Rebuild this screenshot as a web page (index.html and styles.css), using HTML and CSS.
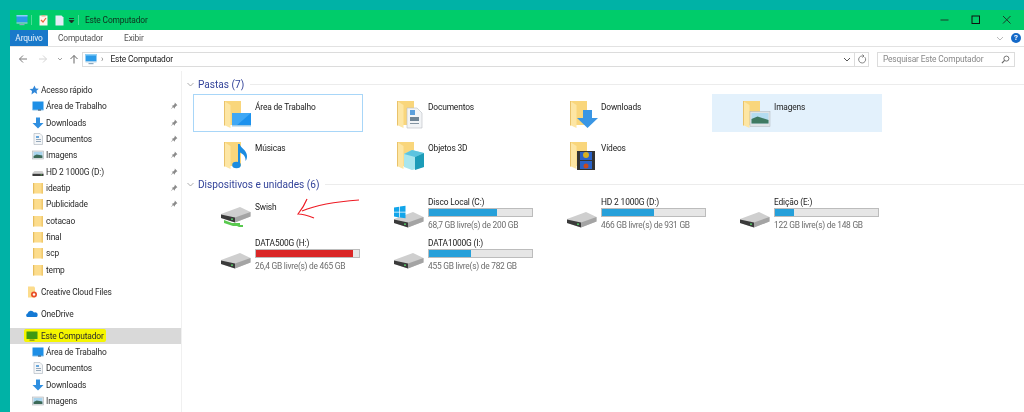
FILE: index.html
```html
<!DOCTYPE html>
<html lang="pt">
<head>
<meta charset="utf-8">
<title>Este Computador</title>
<link rel="stylesheet" href="styles.css">
</head>
<body>
<svg class="defs" width="0" height="0">
  <defs>
    <symbol id="monitor" viewBox="0 0 12 12"><rect x="0.5" y="1" width="11" height="7.5" fill="#2b9be8"/><rect x="0.5" y="1" width="11" height="1.5" fill="#8cd0f7"/><rect x="0.5" y="8.5" width="11" height="1" fill="#bcd6e8"/><rect x="3.5" y="10" width="5" height="1.2" fill="#8aa8c0"/></symbol>
    <symbol id="desk" viewBox="0 0 12 12"><rect x="0.5" y="1.5" width="11" height="8.5" fill="#1e8fe6"/><rect x="0.5" y="9.6" width="11" height="0.9" fill="#8cc4ec"/><rect x="6" y="9.6" width="3" height="0.9" fill="#345"/></symbol>
    <symbol id="down" viewBox="0 0 12 12"><path d="M4 0.5h4v5.5h3.5L6 11.5 0.5 6H4z" fill="#2f8fe0"/></symbol>
    <symbol id="doc" viewBox="0 0 12 12"><path d="M2 0.5h6l2.5 2.5v8.5H2z" fill="#f4f6f8" stroke="#b4bcc4" stroke-width="0.7"/><rect x="4" y="3" width="3" height="2" fill="#6aa8dc"/><rect x="4" y="6" width="5" height="0.8" fill="#7d95aa"/><rect x="4" y="8" width="5" height="0.8" fill="#7d95aa"/></symbol>
    <symbol id="pic" viewBox="0 0 12 12"><rect x="0.5" y="2" width="11" height="8" fill="#e3e6e9" stroke="#b0b4b8" stroke-width="0.6"/><rect x="1.6" y="3" width="8.8" height="6" fill="#a8d4ee"/><path d="M1.6 7l3-1.6 5.8 1.2V9H1.6z" fill="#3c6a58"/></symbol>
    <symbol id="hd" viewBox="0 0 12 12"><path d="M0.5 7l2-2h8l1 2v2.5H0.5z" fill="#d0d0d0"/><rect x="0.5" y="7.8" width="11" height="2.2" fill="#3c3c3c"/><rect x="8.6" y="8.4" width="1.2" height="0.9" fill="#5fd35f"/></symbol>
    <symbol id="fold" viewBox="0 0 12 12"><path d="M1 1h8.5l1.5 1v9.5H1z" fill="#fcdc8c"/><path d="M1 1h1.2v10.5H1z" fill="#e6bd5e"/><path d="M9.5 1h1.500v10.500H9.500z" fill="#f0c86c"/></symbol>
    <symbol id="pin" viewBox="0 0 8 8"><path d="M4.800 0.600l2.600 2.600-1 .5-1.400 1.600-.3 1.400-3-3 1.500-.3 1.500-1.400zM2.400 5l-1.600 2.200L3 5.600z" fill="#8a8a8a"/></symbol>
    <symbol id="bigfolder" viewBox="0 0 32 32"><path d="M3 2h17v24H3z" fill="#f9d67c"/><path d="M3 2l6.500 4v23L3 26z" fill="#fde6a4"/><path d="M3 2h1v24.500H3z" fill="#e9c26a"/></symbol>
    <symbol id="drive" viewBox="0 0 30 16"><path d="M0 7L19 0l10.500 5v4.500L14 15.500 0 11z" fill="#cfcfcf"/><path d="M0 7.500L14 10.500v5L0 11z" fill="#3a3a3a"/><path d="M14 10.500L29.500 5v4.500L14 15.500z" fill="#a4a4a4"/><rect x="10" y="11.500" width="2" height="1.300" fill="#59d66b"/></symbol>
  </defs>
</svg>
<div class="window">
  <header class="titlebar">
    <div class="qat">
      <svg class="ico12"><use href="#monitor"/></svg>
      <span class="qsep"></span>
      <svg class="qico" viewBox="0 0 9 11"><path d="M0.500 0.500h8v10h-8z" fill="#fdf6ee"/><path d="M2 5l2 2 3-4" stroke="#e8673a" stroke-width="1.200" fill="none"/><rect x="2.500" y="0" width="4" height="1.500" fill="#cdb38e"/></svg>
      <svg class="qico qdoc" viewBox="0 0 9 11"><path d="M0.500 0.500h6l2 2v8h-8z" fill="#e4ecf6"/></svg>
      <svg class="qmore" viewBox="0 0 7 7"><path d="M1 1.500h5M1.200 3.500h4.600L3.500 6z" stroke="#222" stroke-width="0.800" fill="#222"/></svg>
      <span class="qsep"></span>
      <span class="wintitle">Este Computador</span>
    </div>
    <div class="controls">
      <svg class="ctl" viewBox="0 0 10 10"><path d="M0.500 5h8" stroke="#1c3b2a" stroke-width="1"/></svg>
      <svg class="ctl" viewBox="0 0 10 10"><rect x="1" y="1" width="7.500" height="7.500" fill="none" stroke="#111" stroke-width="1"/></svg>
      <svg class="ctl" viewBox="0 0 10 10"><path d="M1 1l7.500 7.500M8.500 1L1 8.500" stroke="#1c3b2a" stroke-width="1"/></svg>
    </div>
  </header>
  <nav class="ribbon">
    <span class="tab tab-file">Arquivo</span>
    <span class="tab">Computador</span>
    <span class="tab tab-view">Exibir</span>
    <span class="ribbon-end">
      <svg class="rchev" viewBox="0 0 8 5"><path d="M1 1l3 3 3-3" fill="none" stroke="#a8a8a8" stroke-width="0.800"/></svg>
      <span class="help">?</span>
    </span>
  </nav>
  <div class="addr">
    <div class="navs">
      <svg class="nav" viewBox="0 0 10 10"><path d="M9 5H1.500M5 1.500L1.500 5 5 8.500" fill="none" stroke="#7a7a7a" stroke-width="1"/></svg>
      <svg class="nav" viewBox="0 0 10 10"><path d="M1 5h7.500M5 1.500L8.500 5 5 8.500" fill="none" stroke="#d4d4d4" stroke-width="1"/></svg>
      <svg class="nav nav-s" viewBox="0 0 6 6"><path d="M1 2l2 2 2-2" fill="none" stroke="#8a8a8a" stroke-width="0.800"/></svg>
      <svg class="nav" viewBox="0 0 10 10"><path d="M5 9.500V1.500M1.500 5L5 1.500 8.500 5" fill="none" stroke="#666" stroke-width="1"/></svg>
    </div>
    <div class="addrbox">
      <svg class="ico12"><use href="#monitor"/></svg>
      <span class="crumb-sep">›</span>
      <span class="crumb">Este Computador</span>
      <svg class="addr-dd" viewBox="0 0 8 5"><path d="M1 1l3 3 3-3" fill="none" stroke="#555" stroke-width="1"/></svg>
      <span class="addr-div"></span>
      <svg class="addr-ref" viewBox="0 0 10 10"><path d="M7.800 3.200A3.500 3.500 0 1 1 4.800 2H7M5.500 0.500L7 2 5.500 3.500" fill="none" stroke="#777" stroke-width="0.900"/></svg>
    </div>
    <div class="search">
      <span>Pesquisar Este Computador</span>
      <svg class="lens" viewBox="0 0 10 10"><circle cx="6" cy="4" r="2.800" fill="none" stroke="#666"/><path d="M4 6L1 9" stroke="#666" stroke-width="1.300"/></svg>
    </div>
  </div>
  <div class="main">
    <aside class="side">
      <div class="row row-top"><svg class="star" viewBox="0 0 10 10"><path d="M5.500 0.500l1.300 3 3 .3-2.300 2 .7 3.200-2.700-1.700L2.500 9.500 3 6 .5 4l3.300-.3z" fill="#2f86d8"/></svg>Acesso rápido</div>
      <div class="row"><svg class="ico12"><use href="#desk"/></svg><span class="lbl">Área de Trabalho</span><svg class="pin"><use href="#pin"/></svg></div>
      <div class="row"><svg class="ico12"><use href="#down"/></svg><span class="lbl">Downloads</span><svg class="pin"><use href="#pin"/></svg></div>
      <div class="row"><svg class="ico12"><use href="#doc"/></svg><span class="lbl">Documentos</span><svg class="pin"><use href="#pin"/></svg></div>
      <div class="row"><svg class="ico12"><use href="#pic"/></svg><span class="lbl">Imagens</span><svg class="pin"><use href="#pin"/></svg></div>
      <div class="row"><svg class="ico12"><use href="#hd"/></svg><span class="lbl">HD 2 1000G (D:)</span><svg class="pin"><use href="#pin"/></svg></div>
      <div class="row"><svg class="ico12"><use href="#fold"/></svg><span class="lbl">ideatip</span><svg class="pin"><use href="#pin"/></svg></div>
      <div class="row"><svg class="ico12"><use href="#fold"/></svg><span class="lbl">Publicidade</span><svg class="pin"><use href="#pin"/></svg></div>
      <div class="row"><svg class="ico12"><use href="#fold"/></svg><span class="lbl">cotacao</span></div>
      <div class="row"><svg class="ico12"><use href="#fold"/></svg><span class="lbl">final</span></div>
      <div class="row"><svg class="ico12"><use href="#fold"/></svg><span class="lbl">scp</span></div>
      <div class="row"><svg class="ico12"><use href="#fold"/></svg><span class="lbl">temp</span></div>
      <div class="row row-icon row-gap"><svg class="ico-top" viewBox="0 0 12 12"><path d="M2 0.500h6l1 1v10H2z" fill="#fcdc8c"/><circle cx="8" cy="8.500" r="3" fill="#e8502a"/><circle cx="8" cy="8.500" r="1.200" fill="#fff"/></svg>Creative Cloud Files</div>
      <div class="row row-icon row-gap"><svg class="ico-top" viewBox="0 0 12 12"><path d="M1 9a2 2 0 0 1 .5-3.500A3.500 3.500 0 0 1 8 4.500 2.500 2.500 0 0 1 11.500 7.500 1.500 1.500 0 0 1 10.500 9z" fill="#1479d4"/></svg>OneDrive</div>
      <div class="row row-gap row-sel"><span class="mark"><svg class="ico-top" viewBox="0 0 12 12"><rect x="0.500" y="1.500" width="11" height="7.500" fill="#3f9a12"/><rect x="3.500" y="9.500" width="5" height="1.200" fill="#7a8a10"/></svg>Este Computador</span></div>
      <div class="row"><svg class="ico12"><use href="#desk"/></svg><span class="lbl">Área de Trabalho</span></div>
      <div class="row"><svg class="ico12"><use href="#doc"/></svg><span class="lbl">Documentos</span></div>
      <div class="row"><svg class="ico12"><use href="#down"/></svg><span class="lbl">Downloads</span></div>
      <div class="row"><svg class="ico12"><use href="#pic"/></svg><span class="lbl">Imagens</span></div>
    </aside>
    <section class="content">
      <h2 class="group"><svg class="gchev" viewBox="0 0 7 5"><path d="M0.500 1l3 3 3-3" fill="none" stroke="#8a8a8a" stroke-width="0.700"/></svg><span>Pastas (7)</span><i></i></h2>
      <div class="tiles">
        <div class="tile tile-focus">
          <svg class="big" viewBox="0 0 32 32"><use href="#bigfolder" width="32" height="32"/><rect x="11" y="14" width="19" height="13" fill="#1c92ee"/><path d="M11 14h19L15 27h-4z" fill="#3fa8f5"/><rect x="11" y="26" width="19" height="1.500" fill="#9cc9e6"/></svg>
          <span class="name">Área de Trabalho</span>
        </div>
        <div class="tile">
          <svg class="big" viewBox="0 0 32 32"><use href="#bigfolder" width="32" height="32"/><path d="M13 9h10l5 5v15H13z" fill="#f2f4f6" stroke="#b8bec4" stroke-width="0.600"/><rect x="16" y="11" width="5" height="5" fill="#5a9fdc"/><rect x="16" y="18" width="9" height="4" fill="#6f8494"/><rect x="16" y="24" width="9" height="1" fill="#8495a2"/></svg>
          <span class="name">Documentos</span>
        </div>
        <div class="tile">
          <svg class="big" viewBox="0 0 32 32"><use href="#bigfolder" width="32" height="32"/><path d="M16 13h9v8h6L20.500 31 10 21h6z" transform="translate(0 -2)" fill="#3a96e4"/></svg>
          <span class="name">Downloads</span>
        </div>
        <div class="tile tile-sel">
          <svg class="big" viewBox="0 0 32 32"><use href="#bigfolder" width="32" height="32"/><rect x="10" y="12.500" width="20" height="15" fill="#dfe3e6" stroke="#b0b6bc" stroke-width="0.500"/><rect x="11.500" y="14" width="17" height="10.500" fill="#b4dcf0"/><path d="M11.500 20l6-2.500 11 3.500v3.500h-17z" fill="#3f7a62"/></svg>
          <span class="name">Imagens</span>
        </div>
        <div class="tile">
          <svg class="big" viewBox="0 0 32 32"><use href="#bigfolder" width="32" height="32"/><path d="M17 25V4h1.800c.4 4 7.200 6 7.200 12 0 2-.5 4-1.500 5 .5-4-2-7-5.500-8.500V25z" fill="#1b8ce0"/><ellipse cx="15.500" cy="25" rx="4.300" ry="3.300" fill="#1b8ce0"/></svg>
          <span class="name">Músicas</span>
        </div>
        <div class="tile">
          <svg class="big" viewBox="0 0 32 32"><use href="#bigfolder" width="32" height="32"/><path d="M18 10l12 3v14l-12 3-8-3V14z" fill="#a8e6ee"/><path d="M10 14l8-4 12 3-9 4z" fill="#5cc4e0"/><path d="M21 17l9-4v14l-9 3z" fill="#1c9cb8"/></svg>
          <span class="name">Objetos 3D</span>
        </div>
        <div class="tile">
          <svg class="big" viewBox="0 0 32 32"><use href="#bigfolder" width="32" height="32"/><rect x="10" y="11" width="18" height="19" fill="#333"/><rect x="13" y="12" width="12" height="8" fill="#2a62c8"/><rect x="13" y="21" width="12" height="8" fill="#2a62c8"/><circle cx="19" cy="15" r="3" fill="#d8b020"/><circle cx="19" cy="26" r="2.500" fill="#c84a20"/></svg>
          <span class="name">Vídeos</span>
        </div>
      </div>
      <h2 class="group group-2"><svg class="gchev" viewBox="0 0 7 5"><path d="M0.500 1l3 3 3-3" fill="none" stroke="#8a8a8a" stroke-width="0.700"/></svg><span>Dispositivos e unidades (6)</span><i></i></h2>
      <div class="tiles tiles-drives">
        <div class="tile">
          <svg class="big big-drive" viewBox="0 0 32 32"><use href="#drive" x="0" y="7" width="30" height="16"/><path d="M3 20l8 3h8v2h3v2h-4l-2-1h-4l-9-3z" fill="#59c94f"/></svg>
          <span class="name name-swish">Swish</span>
        </div>
        <div class="tile">
          <svg class="big big-drive" viewBox="0 0 32 32"><use href="#drive" x="0" y="12" width="30" height="16"/><path d="M0 7.500l5.300-.8v5H0zM6 6.600L11.500 5.800v5.900H6zM0 12.400h5.300v5L0 16.600zM6 12.400h5.500v5.900L6 17.500z" fill="#12a5ea"/></svg>
          <div class="meter"><span class="name">Disco Local (C:)</span><div class="bar"><b style="width:66%"></b></div><span class="free">68,7 GB livre(s) de 200 GB</span></div>
        </div>
        <div class="tile">
          <svg class="big big-drive" viewBox="0 0 32 32"><use href="#drive" x="0" y="12" width="30" height="16"/></svg>
          <div class="meter"><span class="name">HD 2 1000G (D:)</span><div class="bar"><b style="width:50%"></b></div><span class="free">466 GB livre(s) de 931 GB</span></div>
        </div>
        <div class="tile">
          <svg class="big big-drive" viewBox="0 0 32 32"><use href="#drive" x="0" y="12" width="30" height="16"/></svg>
          <div class="meter"><span class="name">Edição (E:)</span><div class="bar"><b style="width:18%"></b></div><span class="free">122 GB livre(s) de 148 GB</span></div>
        </div>
        <div class="tile">
          <svg class="big big-drive" viewBox="0 0 32 32"><use href="#drive" x="0" y="12" width="30" height="16"/></svg>
          <div class="meter"><span class="name">DATA500G (H:)</span><div class="bar"><b class="low" style="width:94%"></b></div><span class="free">26,4 GB livre(s) de 465 GB</span></div>
        </div>
        <div class="tile">
          <svg class="big big-drive" viewBox="0 0 32 32"><use href="#drive" x="0" y="12" width="30" height="16"/></svg>
          <div class="meter"><span class="name">DATA1000G (I:)</span><div class="bar"><b style="width:41%"></b></div><span class="free">455 GB livre(s) de 782 GB</span></div>
        </div>
      </div>
      <svg class="arrow" viewBox="0 0 70 24"><path d="M64 2C50 3 26 5 7 13M12 1C10 6 7 11 3 16 8 16 14 18 19 20" fill="none" stroke="#ee1c25" stroke-width="1.200"/></svg>
    </section>
  </div>
</div>
</body>
</html>
```
FILE: styles.css
```css
* { box-sizing: border-box; }
html, body { margin: 0; height: 412px; overflow: hidden; }
body {
  background: #00b2a6;
  padding: 10px 0 0 10px;
  font-family: Roboto, "Noto Sans", sans-serif;
  font-size: 8.4px;
  letter-spacing: -0.15px;
  color: #2a2a2a;
}
.defs { position: absolute; }
.window { background: #fff; height: 402px; display: flex; flex-direction: column; filter: blur(0.35px); }

.titlebar { height: 20px; background: #00cc6a; display: flex; align-items: center; justify-content: space-between; flex: none; }
.qat { display: flex; align-items: center; padding-left: 6px; }
.ico12 { width: 12px; height: 12px; flex: none; }
.qsep { width: 1px; height: 10px; background: #4fdc98; margin: 0 4px 0 3px; }
.qico { width: 9px; height: 11px; margin-left: 3px; }
.qdoc { margin-left: 7px; }
.qmore { width: 7px; height: 7px; margin: 0 0 0 4px; }
.wintitle { color: #10301f; margin-left: 2px; }
.controls { display: flex; gap: 21px; padding-right: 12px; }
.ctl { width: 10px; height: 10px; }

.ribbon { height: 17px; display: flex; align-items: center; border-bottom: 1px solid #e2e2e2; flex: none; color: #555; }
.tab { padding: 0 10px; }
.tab-view { margin-left: 1px; }
.tab-file { background: #1979ca; color: #e8f1fa; height: 16px; line-height: 16px; width: 38px; padding: 0; text-align: center; }
.ribbon-end { margin-left: auto; display: flex; align-items: center; gap: 7px; padding-right: 3px; }
.rchev { width: 8px; height: 5px; }
.help { width: 10px; height: 10px; border-radius: 50%; background: #1469c8; color: #fff; font-size: 8px; line-height: 10px; text-align: center; font-weight: 700; }

.addr { height: 24px; display: flex; align-items: center; flex: none; }
.navs { display: flex; align-items: center; width: 72px; padding-left: 8px; gap: 10px; flex: none; }
.nav { width: 10px; height: 10px; flex: none; }
.nav-s { width: 6px; height: 6px; margin: 0 -4px 0 -1px; }
.addrbox { width: 787px; height: 15px; border: 1px solid #dcdcdc; display: flex; align-items: center; padding-left: 2px; flex: none; }
.crumb-sep { margin: 0 7px 0 4px; color: #777; }
.crumb { color: #222; }
.addr-dd { width: 8px; height: 5px; margin-left: auto; }
.addr-div { width: 1px; height: 13px; background: #dcdcdc; margin: 0 2px 0 3px; }
.addr-ref { width: 10px; height: 10px; margin-right: 1px; }
.search { width: 138px; height: 15px; margin-left: 8px; border: 1px solid #dcdcdc; display: flex; align-items: center; justify-content: space-between; padding: 0 4px 0 5px; color: #888; flex: none; }
.lens { width: 9px; height: 9px; }

.main { flex: 1; display: flex; min-height: 0; }
.side { width: 172px; flex: none; padding-top: 11px; border-right: 1px solid #f0f0f0; }
.row { height: 16.33px; display: flex; align-items: center; padding-left: 22px; color: #2a2a2a; white-space: nowrap; }
.row-top { padding-left: 19px; }
.row-icon { padding-left: 16px; }
.row-gap { margin-top: 5.67px; }
.lbl { margin-left: 2px; flex: 1; }
.pin { width: 8px; height: 8px; margin-right: 3px; }
.star { width: 10px; height: 10px; margin-right: 2px; }
.ico-top { width: 12px; height: 12px; margin-right: 3px; flex: none; }
.row-sel { background: #d9d9d9; padding-left: 14px; }
.mark { background: #f5f500; display: flex; align-items: center; padding-right: 2px; height: 13px; border-radius: 2px; }
.mark .ico-top { margin: 0 3px 0 2px; }

.content { flex: 1; padding: 5px 0 0 5px; position: relative; min-width: 0; }
.group { margin: 0; height: 16px; display: flex; align-items: center; font-size: 10.1px; letter-spacing: 0; font-weight: 400; color: #34449a; }
.group-2 { margin-top: 3px; }
.gchev { width: 7px; height: 5px; margin-right: 4px; }
.group i { flex: 1; height: 1px; background: #ececec; margin-left: 6px; }
.tiles { display: grid; grid-template-columns: repeat(4, 170px); grid-auto-rows: 38px; gap: 3px; margin: 2px 0 0 6px; }
.tiles-drives { margin-top: 1px; }
.tile { display: flex; align-items: flex-start; padding: 4px 0 0 27px; border: 1px solid transparent; }
.tile-focus { border-color: #a8d6f8; }
.tile-sel { background: #e3f1fc; }
.big { width: 32px; height: 32px; flex: none; margin-right: 2px; }
.big-drive { margin-top: 2px; }
.name { color: #222; display: block; line-height: 12px; margin-top: 2px; white-space: nowrap; }
.name-swish { margin-top: 3px; }
.meter { display: flex; flex-direction: column; width: 105px; margin-top: -2px; }
.meter .name { margin: 0; }
.bar { height: 9px; background: #e6e6e6; border: 1px solid #bcbcbc; }
.bar b { display: block; height: 100%; background: #26a0da; }
.bar b.low { background: #da2626; }
.free { color: #6d6d6d; line-height: 12px; margin-top: 2px; white-space: nowrap; letter-spacing: -0.25px; }
.arrow { position: absolute; left: 113px; top: 127px; width: 70px; height: 24px; }
```
